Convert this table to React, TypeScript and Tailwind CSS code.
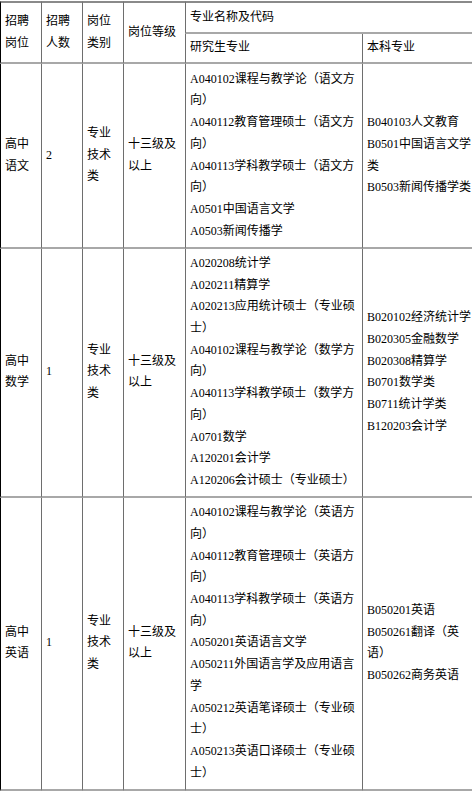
const rows = [
  {
    post: "高中语文",
    count: "2",
    type: "专业技术类",
    level: "十三级及以上",
    grad: [
      "A040102课程与教学论（语文方向）",
      "A040112教育管理硕士（语文方向）",
      "A040113学科教学硕士（语文方向）",
      "A0501中国语言文学",
      "A0503新闻传播学",
    ],
    undergrad: ["B040103人文教育", "B0501中国语言文学类", "B0503新闻传播学类"],
  },
  {
    post: "高中数学",
    count: "1",
    type: "专业技术类",
    level: "十三级及以上",
    grad: [
      "A020208统计学",
      "A020211精算学",
      "A020213应用统计硕士（专业硕士）",
      "A040102课程与教学论（数学方向）",
      "A040113学科教学硕士（数学方向）",
      "A0701数学",
      "A120201会计学",
      "A120206会计硕士（专业硕士）",
    ],
    undergrad: [
      "B020102经济统计学",
      "B020305金融数学",
      "B020308精算学",
      "B0701数学类",
      "B0711统计学类",
      "B120203会计学",
    ],
  },
  {
    post: "高中英语",
    count: "1",
    type: "专业技术类",
    level: "十三级及以上",
    grad: [
      "A040102课程与教学论（英语方向）",
      "A040112教育管理硕士（英语方向）",
      "A040113学科教学硕士（英语方向）",
      "A050201英语语言文学",
      "A050211外国语言学及应用语言学",
      "A050212英语笔译硕士（专业硕士）",
      "A050213英语口译硕士（专业硕士）",
    ],
    undergrad: ["B050201英语", "B050261翻译（英语）", "B050262商务英语"],
  },
];

// vertical rules dark, horizontal rules light and thicker
const td = "border-l border-b-2 border-l-[#6e6e6e] border-b-[#a8a8a8] px-1 align-middle";
const first = "border-l border-b-2 border-l-black border-b-[#a8a8a8] px-1 align-middle";
const head = "border-t-2 border-t-[#8a8a8a] py-[3.5px] font-normal text-left";
const body = "py-[4.3px]";

export default function App() {
  return (
    <div className="w-[472px] min-h-[792px] overflow-hidden bg-white pt-px">
      <table className="w-[480px] table-fixed border-separate border-spacing-0 text-[12px] leading-[21.7px] text-black font-['Liberation_Serif','Noto_Sans_CJK_SC',serif]">
        <colgroup>
          <col className="w-[41px]" />
          <col className="w-[41px]" />
          <col className="w-[41px]" />
          <col className="w-[62px]" />
          <col className="w-[177px]" />
          <col className="w-[118px]" />
        </colgroup>
        <thead>
          <tr>
            <th rowSpan={2} className={`${first} ${head}`}>招聘岗位</th>
            <th rowSpan={2} className={`${td} ${head}`}>招聘人数</th>
            <th rowSpan={2} className={`${td} ${head}`}>岗位类别</th>
            <th rowSpan={2} className={`${td} ${head}`}>岗位等级</th>
            <th colSpan={2} className={`${td} ${head}`}>专业名称及代码</th>
          </tr>
          <tr>
            <th className={`${td} py-[3.5px] font-normal text-left`}>研究生专业</th>
            <th className={`${td} py-[3.5px] font-normal text-left`}>本科专业</th>
          </tr>
        </thead>
        <tbody>
          {rows.map((row, i) => (
            <tr key={i}>
              <td className={`${first} ${body}`}>{row.post}</td>
              <td className={`${td} ${body}`}>{row.count}</td>
              <td className={`${td} ${body}`}>{row.type}</td>
              <td className={`${td} ${body}`}>{row.level}</td>
              <td className={`${td} ${body}`}>
                {row.grad.map((g, j) => (
                  <div key={j}>{g}</div>
                ))}
              </td>
              <td className={`${td} ${body}`}>
                {row.undergrad.map((u, j) => (
                  <div key={j}>{u}</div>
                ))}
              </td>
            </tr>
          ))}
        </tbody>
      </table>
    </div>
  );
}
